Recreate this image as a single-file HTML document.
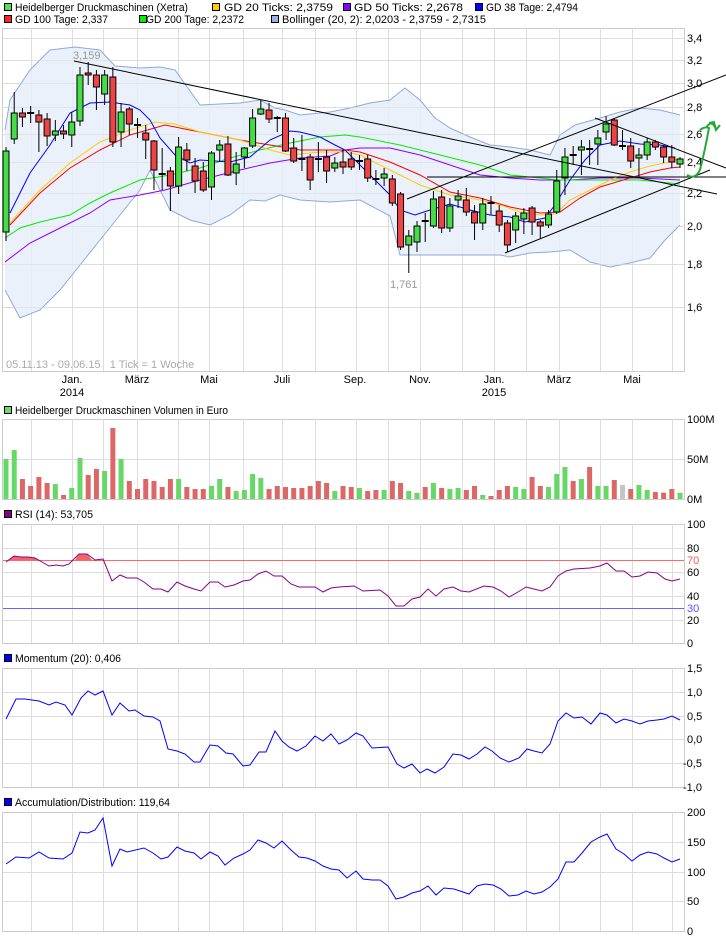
<!DOCTYPE html>
<html><head><meta charset="utf-8"><style>
html,body{margin:0;padding:0;background:#fff;}
svg{display:block;font-family:"Liberation Sans",Arial,sans-serif;font-size:11px;}
</style></head><body>
<svg id="s" width="726" height="940" viewBox="0 0 726 940" xmlns="http://www.w3.org/2000/svg">
<rect width="726" height="940" fill="#fff"/>
<!-- legend -->
<g stroke="#000" stroke-width="1">
<rect x="4.5" y="3.5" width="7" height="7" fill="#5d5"/>
<rect x="212.5" y="3.5" width="7" height="7" fill="#fc0"/>
<rect x="343.5" y="3.5" width="7" height="7" fill="#80f"/>
<rect x="475.5" y="3.5" width="7" height="7" fill="#00f"/>
<rect x="4.5" y="15.5" width="7" height="7" fill="#f22"/>
<rect x="139.5" y="15.5" width="7" height="7" fill="#0e0"/>
<rect x="271.5" y="15.5" width="7" height="7" fill="#9ab3e0"/>
</g>
<g fill="#000">
<text x="15" y="11" textLength="173" lengthAdjust="spacingAndGlyphs">Heidelberger Druckmaschinen (Xetra)</text>
<text x="224" y="11" textLength="109" lengthAdjust="spacingAndGlyphs">GD 20 Ticks: 2,3759</text>
<text x="354" y="11" textLength="109" lengthAdjust="spacingAndGlyphs">GD 50 Ticks: 2,2678</text>
<text x="486" y="11" textLength="92" lengthAdjust="spacingAndGlyphs">GD 38 Tage: 2,4794</text>
<text x="15" y="23" textLength="93" lengthAdjust="spacingAndGlyphs">GD 100 Tage: 2,337</text>
<text x="146" y="23" textLength="98" lengthAdjust="spacingAndGlyphs">GD 200 Tage: 2,2372</text>
<text x="282" y="23" textLength="204" lengthAdjust="spacingAndGlyphs">Bollinger (20, 2): 2,0203 - 2,3759 - 2,7315</text>
</g>
<g id="dyn"></g>
</svg>
<script>
(function(){
var NS="http://www.w3.org/2000/svg",g=document.getElementById("dyn"),out=[];
function L(x){out.push(x);}
var VX=[31,72,103,137,178,209,243,282,315,356,388,420,462,494,526,559,600,632,672];
function frame(top,bot,hs){
  L('<rect x="2.5" y="'+top+'.5" width="682" height="'+(bot-top)+'" fill="#fff" stroke="#ccc"/>');
  VX.forEach(function(x){L('<line x1="'+x+'.5" y1="'+top+'" x2="'+x+'.5" y2="'+bot+'" stroke="#ddd"/>');});
  hs.forEach(function(y){L('<line x1="3" y1="'+y+'.5" x2="684" y2="'+y+'.5" stroke="#ddd"/>');});
}
function lab(x,y,t,c){L('<text x="'+x+'" y="'+y+'" fill="'+(c||'#000')+'">'+t+'</text>');}
function pl(pts,c,w){var s=[];for(var i=0;i<pts.length;i+=2)s.push(pts[i]+','+pts[i+1]);L('<polyline points="'+s.join(' ')+'" fill="none" stroke="'+c+'" stroke-width="'+(w||1)+'"/>');}
// MAIN
var PY=[38,60,83,107,134,162,193,226,264,307],PL=["3,4","3,2","3,0","2,8","2,6","2,4","2,2","2,0","1,8","1,6"];
frame(28,371,PY);
PY.forEach(function(y,i){lab(687,y+4,PL[i]);});
// bollinger
var up=[5,130,10,100,30,70,50,50,75,47,100,50,115,66,140,68,160,67,175,70,200,105,240,103,260,100,275,108,285,110,300,115,330,112,350,108,370,103,390,100,405,88,420,100,435,118,450,128,470,137,490,145,510,147,530,150,550,155,560,135,575,125,600,118,620,112,640,108,660,110,680,115];
var lo=[5,290,20,318,40,310,60,290,80,265,100,240,120,215,140,190,150,170,160,190,170,210,190,220,210,225,230,215,250,200,265,201,280,195,300,200,330,202,360,200,390,216,400,255,420,255,440,255,470,255,500,255,510,257,530,253,550,252,570,250,590,262,610,267,630,263,650,258,665,240,680,225];
var poly=[];for(var i=0;i<up.length;i+=2)poly.push(up[i]+','+up[i+1]);for(var i=lo.length-2;i>=0;i-=2)poly.push(lo[i]+','+lo[i+1]);
L('<polygon points="'+poly.join(' ')+'" fill="#e6eefa" fill-opacity="0.85"/>');
pl(up,"#8fa8dd");pl(lo,"#8fa8dd");
// horizontal gridlines again over fill lightly
PY.forEach(function(y){L('<line x1="3" y1="'+y+'.5" x2="684" y2="'+y+'.5" stroke="#ddd" stroke-opacity="0.5"/>');});
// MAs
pl([5,262,30,243,60,228,90,213,110,200,140,195,165,190,200,180,240,170,270,163,300,158,330,156,345,150,360,148,390,148,420,155,450,165,480,175,510,178,540,180,570,180,600,178,640,178,680,180],"#80f");
pl([5,238,20,228,40,222,70,215,90,203,110,193,140,180,170,175,200,168,230,158,260,150,290,143,320,137,345,135,360,137,400,145,440,155,480,165,510,175,540,178,560,180,600,180,640,180,680,184],"#0e0");
pl([10,225,40,193,70,168,100,150,130,135,165,125,200,132,240,140,270,145,300,150,345,150,360,152,390,162,420,175,450,192,480,198,510,207,540,213,560,212,580,198,600,187,630,178,650,172,670,168,680,167],"#f00");
pl([10,223,40,190,70,163,100,142,130,130,155,122,175,124,200,132,240,140,270,150,290,155,320,152,345,152,360,155,390,170,420,185,450,195,480,200,500,205,520,212,540,215,555,214,570,200,590,190,610,180,630,172,650,166,670,162,680,158],"#fc0");
pl([10,213,30,173,50,145,70,113,90,103,110,102,130,105,140,110,150,120,160,138,175,155,190,163,200,160,230,162,250,157,270,140,290,131,300,132,320,137,335,145,345,150,360,165,375,180,390,195,400,210,415,215,430,210,450,204,470,210,490,215,510,217,525,222,545,218,555,205,570,180,585,160,600,145,620,141,640,144,660,145,675,148],"#00f");
// candles [o,c,h,l]
var C=[[232,151,147,241],[139,113,92,144],[113,117,108,127],[113,114,106,123],[115,122,110,152],[119,136,113,146],[135,131,120,141],[131,134,125,139],[135,122,112,147],[121,75,67,126],[73,75,62,85],[75,87,70,110],[94,75,70,105],[77,142,67,147],[132,112,103,147],[109,124,107,135],[125,126,118,138],[133,140,125,159],[141,170,140,190],[174,175,148,190],[171,186,167,211],[186,147,137,194],[150,160,143,171],[166,181,158,193],[171,190,162,192],[187,153,151,200],[150,145,140,162],[144,175,136,176],[173,164,152,185],[157,148,147,168],[146,118,109,148],[114,109,100,115],[110,119,103,123],[118,119,116,132],[118,151,113,152],[148,161,138,163],[159,160,135,171],[157,180,154,190],[159,160,142,172],[157,171,150,183],[168,163,157,172],[162,167,150,174],[159,167,152,170],[162,161,155,170],[159,178,155,182],[179,180,170,185],[178,174,168,186],[179,203,175,206],[194,247,192,250],[245,236,230,273],[242,226,221,252],[221,222,213,242],[226,199,191,228],[197,228,190,233],[228,206,198,232],[200,196,190,208],[200,212,188,216],[212,223,205,240],[223,204,198,230],[203,204,196,215],[211,225,205,232],[223,245,220,252],[230,216,212,243],[219,213,208,234],[208,222,206,235],[222,226,220,238],[225,214,210,228],[212,181,170,214],[178,157,148,195],[155,156,146,165],[150,147,140,175],[149,150,140,165],[144,138,130,165],[132,124,116,140],[120,145,118,146],[146,147,130,150],[146,161,138,168],[158,155,148,177],[155,142,138,160],[142,147,140,150],[147,157,145,163],[157,162,145,168],[164,159,157,168]];
function cx(i){return 6+i*8.22;}
C.forEach(function(c,i){
  var x=cx(i),o=c[0],cl=c[1],t=Math.min(o,cl),b=Math.max(o,cl);
  L('<line x1="'+x+'" y1="'+c[2]+'" x2="'+x+'" y2="'+c[3]+'" stroke="#000"/>');
  if(b-t<2){L('<line x1="'+(x-3.5)+'" y1="'+t+'" x2="'+(x+3.5)+'" y2="'+t+'" stroke="#000" stroke-width="2"/>');}
  else L('<rect x="'+(x-3)+'" y="'+t+'" width="6" height="'+(b-t)+'" fill="'+(cl<o?'#44dd44':'#ee4444')+'" stroke="#000"/>');
});
// trend lines
L('<g stroke="#000" stroke-width="1"><line x1="74" y1="61" x2="717" y2="194"/><line x1="407" y1="199" x2="726" y2="75"/><line x1="505" y1="253" x2="710" y2="170"/><line x1="427" y1="177" x2="726" y2="177"/><line x1="595" y1="118" x2="726" y2="168"/></g>');
L('<path d="M687,175 Q695,180 700,170 Q705,150 709,128 Q705,126 700,130 M709,123 L714,122 L716,130 M706,128 Q712,118 716,130 L720,125" fill="none" stroke="#22aa33" stroke-width="2"/>');
lab(73,59,"3,159","#999");lab(390,288,"1,761","#999");
L('<text x="6" y="368" fill="#aaa">05.11.13 - 09.06.15 &#160;&#160;1 Tick = 1 Woche</text>');
// month labels
var M=[[72,"Jan."],[137,"März"],[209,"Mai"],[282,"Juli"],[355,"Sep."],[420,"Nov."],[494,"Jan."],[559,"März"],[632,"Mai"]];
M.forEach(function(m){L('<text x="'+m[0]+'" y="383" text-anchor="middle">'+m[1]+'</text>');});
L('<text x="72" y="396" text-anchor="middle">2014</text><text x="494" y="396" text-anchor="middle">2015</text>');
// VOLUME
L('<rect x="4.5" y="406.5" width="7" height="7" fill="#6d6" stroke="#000"/>');
L('<text x="15" y="414" textLength="213" lengthAdjust="spacingAndGlyphs">Heidelberger Druckmaschinen Volumen in Euro</text>');
frame(419,499,[459]);
lab(687,423,"100M");lab(687,463,"50M");lab(687,503,"0M");
var V=[297,270,357,378,351,369,372,405,384,294,345,327,333,204,297,363,387,357,363,381,357,357,381,387,387,378,357,381,393,390,342,354,387,378,381,384,384,378,363,369,393,378,381,384,393,390,390,363,369,393,399,381,369,384,387,384,390,378,405,408,390,378,381,387,351,378,381,342,321,363,357,321,378,378,360,375,387,375,390,396,398,387,399];
V.forEach(function(p,i){var t=360+p/3,x=cx(i),c=C[i]||[0,0];var col=(i==75)?'#c4c4c4':(c[1]<c[0]?'#66d866':'#dd6666');
  L('<rect x="'+(x-2.5)+'" y="'+t+'" width="5" height="'+(499-t)+'" fill="'+col+'"/>');});
// RSI
L('<rect x="4.5" y="510.5" width="7" height="7" fill="#808" stroke="#000"/>');
L('<text x="15" y="518" textLength="78" lengthAdjust="spacingAndGlyphs">RSI (14): 53,705</text>');
frame(524,643,[548,572,596,620]);
L('<polygon points="8,560 14,556 21,557 28,557 35,558 38,560" fill="#f46464"/><polygon points="75,560 79,554 87,554 92,560" fill="#f46464"/>');
L('<line x1="3" y1="560.5" x2="684" y2="560.5" stroke="#f66"/><line x1="3" y1="608.5" x2="684" y2="608.5" stroke="#66f"/>');
pl([6,562,14,556,21,557,28,557,35,558,42,562,49,566,56,565,63,566,69,564,79,554,87,554,95,560,103,559,112,581,120,575,127,578,137,578,144,582,153,589,161,589,168,592,177,582,185,586,194,589,201,591,210,582,218,582,225,587,234,585,243,581,250,580,258,574,266,571,274,576,282,576,291,584,299,587,315,587,323,592,331,588,339,587,354,586,363,591,380,590,388,596,396,606,404,606,412,599,420,597,428,589,436,596,444,589,453,587,461,591,469,592,484,586,493,587,501,591,509,597,518,592,526,587,534,589,542,591,550,587,558,576,566,571,574,569,590,568,600,566,607,563,616,571,624,571,632,577,640,576,648,572,657,573,665,579,672,581,680,579],"#808");
lab(687,528,"100");lab(687,552,"80");lab(687,564,"70","#f55");lab(687,576,"60");lab(687,600,"40");lab(687,612,"30","#55f");lab(687,624,"20");lab(687,647,"0");
// MOMENTUM
L('<rect x="4.5" y="654.5" width="7" height="7" fill="#00f" stroke="#000"/>');
L('<text x="15" y="662" textLength="106" lengthAdjust="spacingAndGlyphs">Momentum (20): 0,406</text>');
frame(668,787,[692,716,739,763]);
pl([6,719,16,699,25,699,39,701,49,705,56,702,65,705,72,715,81,698,88,691,95,695,103,691,112,715,120,703,129,711,135,710,144,716,153,717,160,721,168,749,177,751,185,754,194,762,200,762,210,745,218,746,226,753,233,754,243,766,250,765,259,752,266,752,275,731,282,741,289,747,297,751,306,746,315,736,323,741,331,734,339,744,347,740,356,733,363,736,372,748,388,747,397,764,404,768,412,764,420,773,427,769,435,773,444,767,453,754,461,755,469,759,477,754,485,747,492,751,500,758,509,762,519,758,527,749,534,751,542,753,550,744,558,721,566,713,574,718,582,717,591,724,600,713,607,715,616,723,624,719,632,721,640,724,648,721,657,720,664,719,672,716,680,720],"#00f");
lab(687,672,"1,5");lab(687,696,"1,0");lab(687,720,"0,5");lab(687,743,"0,0");lab(683,767,"-0,5");lab(683,791,"-1,0");
// A/D
L('<rect x="4.5" y="798.5" width="7" height="7" fill="#00f" stroke="#000"/>');
L('<text x="15" y="806" textLength="155" lengthAdjust="spacingAndGlyphs">Accumulation/Distribution: 119,64</text>');
frame(812,931,[842,872,901]);
pl([6,864,16,857,29,858,39,852,49,858,63,859,72,853,80,832,88,833,95,830,103,818,112,866,120,849,127,852,144,848,153,853,161,859,168,857,177,847,185,851,194,853,201,859,210,852,218,856,225,865,234,858,243,854,250,850,258,840,266,843,274,848,282,841,291,850,299,857,307,858,315,861,323,866,331,869,339,870,347,878,356,871,363,879,372,880,380,880,388,886,396,899,404,897,412,893,420,891,428,886,436,895,444,888,454,889,469,894,477,886,485,884,493,885,501,889,509,896,518,895,526,891,534,894,542,892,550,887,558,879,566,862,574,862,582,853,591,842,600,837,607,834,616,849,624,854,632,861,640,855,648,852,657,854,664,858,672,862,680,859],"#00f");
lab(687,816,"200");lab(687,846,"150");lab(687,876,"100");lab(687,905,"50");lab(687,935,"0");
g.innerHTML=out.join("");
})();
</script>
</body></html>
